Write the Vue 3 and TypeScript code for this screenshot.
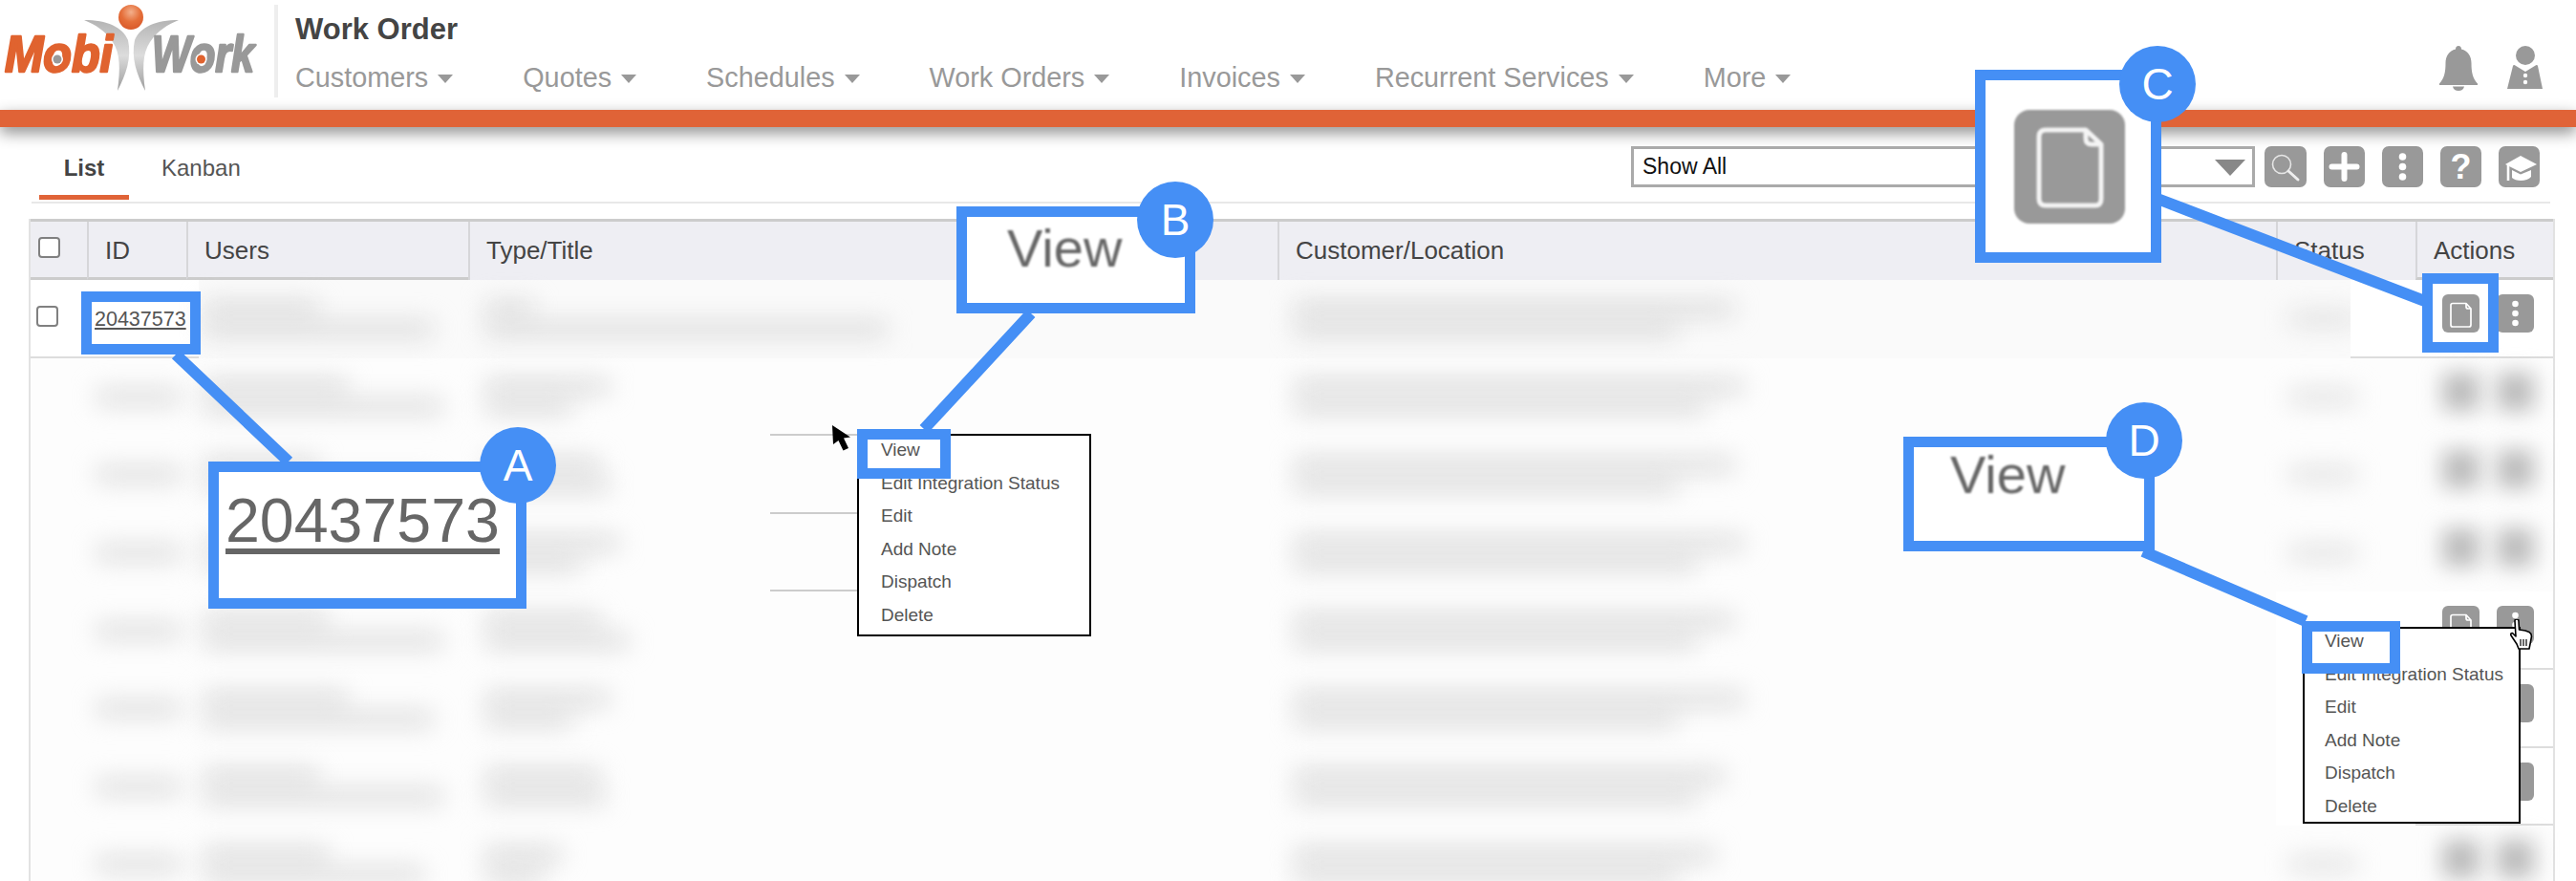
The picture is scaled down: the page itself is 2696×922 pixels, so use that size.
<script setup lang="ts">
interface Row {
  first?: boolean
  sharp?: boolean
  dots?: boolean
  doc?: boolean
  mark?: boolean
  users: number[]
  type: number[]
  cust: number[]
}

const nav: string[] = ['Customers', 'Quotes', 'Schedules', 'Work Orders', 'Invoices', 'Recurrent Services', 'More']
const heads: string[] = ['ID', 'Users', 'Type/Title', 'Customer/Location', 'Status', 'Actions']
const items: string[] = ['View', 'Edit Integration Status', 'Edit', 'Add Note', 'Dispatch', 'Delete']

const rows: Row[] = [
  { first: true, doc: true, dots: true, sharp: true, users: [120, 240], type: [50, 420], cust: [460, 400] },
  { mark: true, users: [150, 250], type: [130, 90], cust: [470, 430] },
  { mark: true, users: [120, 240], type: [120, 130], cust: [460, 400] },
  { mark: true, users: [150, 220], type: [140, 100], cust: [470, 420] },
  { sharp: true, doc: true, dots: true, users: [130, 250], type: [120, 150], cust: [460, 420] },
  { sharp: true, dots: true, users: [150, 240], type: [130, 90], cust: [470, 400] },
  { sharp: true, dots: true, users: [120, 250], type: [120, 125], cust: [450, 420] },
  { users: [130, 230], type: [80, 60], cust: [440, 400] },
]
</script>

<template>
  <div class="page">
    <header class="top">
      <svg class="logo" width="268" height="96" viewBox="0 0 268 96">
        <defs>
          <linearGradient id="limb" x1="0" y1="0" x2="0" y2="1">
            <stop offset="0" stop-color="#b4b4b4" />
            <stop offset="0.5" stop-color="#dcdcdc" />
            <stop offset="1" stop-color="#9c9c9c" />
          </linearGradient>
          <radialGradient id="ball" cx="0.5" cy="0.3" r="0.7">
            <stop offset="0" stop-color="#f3b08c" />
            <stop offset="0.55" stop-color="#e56f3a" />
            <stop offset="1" stop-color="#d95a2a" />
          </radialGradient>
        </defs>
        <path d="M88 21 C112 21 128 28 134 42 C138 60 132 78 123 95 C126 72 126 56 118 44 C110 32 100 26 88 21Z" fill="url(#limb)" />
        <path d="M187 21 C163 21 147 28 141 42 C137 60 143 78 152 95 C149 72 149 56 157 44 C165 32 175 26 187 21Z" fill="url(#limb)" />
        <circle cx="137" cy="18" r="13" fill="url(#ball)" />
        <text class="logo-word mobi" x="5" y="75" textLength="113" lengthAdjust="spacingAndGlyphs">Mobi</text>
        <text class="logo-word work" x="159" y="75" textLength="107" lengthAdjust="spacingAndGlyphs">Work</text>
        <circle cx="60" cy="62" r="6" fill="#fff" /><circle cx="60" cy="62" r="4.5" fill="#999" />
        <circle cx="210.500" cy="62" r="6" fill="#fff" /><circle cx="210.500" cy="62" r="4.5" fill="#e0632f" />
      </svg>
      <div class="divider"></div>
      <div class="title-block">
        <div class="title">Work Order</div>
        <nav class="nav">
          <span v-for="n in nav" :key="n" class="nav-item">{{ n }}<i class="caret"></i></span>
        </nav>
      </div>
      <div class="top-icons">
        <svg width="40" height="47" viewBox="0 0 40 47">
          <path fill="#999" d="M20 0c2 0 3 1.500 3 3.500C30 5 33.500 11 33.500 18c0 10 1.500 16 6.500 21.500V41H0v-1.500C5 34 6.500 28 6.500 18 6.500 11 10 5 17 3.500 17 1.500 18 0 20 0Z" />
          <path fill="#999" d="M14 42.500h12c-.5 3-3 4.500-6 4.500s-5.500-1.500-6-4.500Z" />
        </svg>
        <svg width="37" height="45" viewBox="0 0 37 45">
          <circle cx="19" cy="10" r="10" fill="#999" />
          <path fill="#999" d="M6 21 Q6 20 7.500 20 L19 27 L30.500 20 Q32 20 32 21 L37 45 H0Z" />
          <circle cx="19" cy="31" r="2.200" fill="#fff" /><circle cx="19" cy="38" r="2.200" fill="#fff" />
        </svg>
      </div>
    </header>
    <div class="band"></div>

    <div class="toolbar">
      <div class="tabs">
        <span class="tab tab-on">List</span>
        <span class="tab">Kanban</span>
      </div>
      <div class="tools">
        <div class="select">Show All<i class="select-caret"></i></div>
        <button class="tool tool-search">
          <svg width="44" height="43" viewBox="0 0 44 43">
            <circle cx="18" cy="19" r="9.500" fill="none" stroke="#e6e6e6" stroke-width="1.600" />
            <path d="M25 26 L35 35" stroke="#eee" stroke-width="3" stroke-linecap="round" />
          </svg>
        </button>
        <button class="tool">
          <svg width="43" height="43" viewBox="0 0 43 43">
            <path d="M21.500 9V34M8.500 21.500H34.500" stroke="#fff" stroke-width="6" stroke-linecap="round" />
          </svg>
        </button>
        <button class="tool">
          <svg width="43" height="43" viewBox="0 0 43 43">
            <circle cx="21.500" cy="11" r="3.800" fill="#fff" /><circle cx="21.500" cy="21.500" r="3.800" fill="#fff" /><circle cx="21.500" cy="32" r="3.800" fill="#fff" />
          </svg>
        </button>
        <button class="tool tool-q">?</button>
        <button class="tool">
          <svg width="43" height="43" viewBox="0 0 43 43">
            <path fill="#fff" d="M23 10 L40 19 L23 27 L7 19Z" />
            <path fill="#fff" d="M14 25 L23 29.500 L34 25 V32 C30 37 18 37 14 33Z" />
            <path d="M10 20 V36" stroke="#fff" stroke-width="2.600" />
          </svg>
        </button>
      </div>
    </div>

    <section class="table">
      <div class="grid head">
        <div class="hcell hcell-check"><input class="check" type="checkbox" /></div>
        <div v-for="h in heads" :key="h" class="hcell">{{ h }}</div>
      </div>
      <div v-for="(r, i) in rows" :key="i" class="grid row" :class="{ 'row-first': r.first }">
        <div class="cell cell-left cell-box"><input v-if="r.first" class="check" type="checkbox" /></div>
        <div class="cell cell-left cell-id">
          <a v-if="r.first" class="id-link">20437573</a>
          <span v-else class="bar bar-id"></span>
        </div>
        <div class="cell stack cell-users">
          <span v-for="w in r.users" :key="w" class="bar" :style="{ width: w + 'px' }"></span>
        </div>
        <div class="cell stack cell-type" :class="{ 'cell-marked': r.mark }">
          <span v-for="w in r.type" :key="w" class="bar" :style="{ width: w + 'px' }"></span>
        </div>
        <div class="cell stack cell-cust">
          <span v-for="w in r.cust" :key="w" class="bar" :style="{ width: w + 'px' }"></span>
        </div>
        <div class="cell cell-status" :class="{ 'status-clear': r.sharp && !r.first }">
          <span v-if="!r.sharp || r.first" class="bar bar-status"></span>
        </div>
        <div class="cell cell-actions" :class="{ 'cell-sharp': r.sharp }">
          <template v-if="r.sharp">
            <span class="act" :class="{ 'act-hidden': !r.doc }">
              <svg width="39" height="40" viewBox="0 0 39 40">
                <path d="M11 9.500 Q9 9.500 9 11.500 V32 Q9 34 11 34 H28 Q30 34 30 32 V15 L25 9.500Z M25 9.500 V13 Q25 15 27 15 H30" fill="none" stroke="#fff" stroke-width="1.700" stroke-linejoin="round" />
              </svg>
            </span>
            <span class="act">
              <svg width="39" height="40" viewBox="0 0 39 40">
                <circle cx="19.500" cy="10" r="3.300" fill="#fff" /><circle cx="19.500" cy="20" r="3.300" fill="#fff" /><circle cx="19.500" cy="30" r="3.300" fill="#fff" />
              </svg>
            </span>
          </template>
          <template v-else>
            <span class="blob"></span><span class="blob"></span>
          </template>
        </div>
      </div>
    </section>

    <ul class="menu menu-b">
      <li v-for="m in items" :key="m">{{ m }}</li>
    </ul>
    <ul class="menu menu-d">
      <li v-for="m in items" :key="m">{{ m }}</li>
    </ul>

    <svg class="arrow-cursor" width="22" height="28" viewBox="0 0 22 28">
      <path d="M0 0 L1 20 L6.500 16 L11.500 26.500 L17 24 L12 13.500 L19 12.500Z" fill="#000" />
    </svg>
    <svg class="hand-cursor" width="24" height="32" viewBox="0 0 24 32">
      <path d="M5 2 Q5 0 7 0 Q9 0 9 2 L9.500 11 L13 11.500 L16 12 L20 13.500 Q22.500 15 22.500 18 L21 26 L20 31 H9 L7 26 L1 17 Q0 14.500 2.500 14.500 L6 18Z" fill="#fff" stroke="#000" stroke-width="1.600" stroke-linejoin="round" />
      <path d="M11 21 V28M14 21 V28M17 21 V28" stroke="#000" stroke-width="1.200" />
    </svg>

    <svg class="leaders" width="2696" height="922" viewBox="0 0 2696 922">
      <path d="M184 371 L302 483M1079 328 L967 449M2258 208 L2540 316M2243 577 L2413 650" stroke="#458ff5" stroke-width="12" fill="none" />
    </svg>

    <div class="ring ring-a-s"></div>
    <div class="ring ring-b-s"></div>
    <div class="ring ring-c-s"></div>
    <div class="ring ring-d-s"></div>

    <div class="zoom zoom-a"><span class="zoom-id">20437573</span></div>
    <div class="zoom zoom-b"><span class="zoom-view">View</span></div>
    <div class="zoom zoom-c">
      <span class="zoom-doc">
        <svg width="116" height="119" viewBox="0 0 116 119">
          <path d="M33 21 Q26 21 26 28 V93 Q26 100 33 100 H85 Q91 100 91 93 V36 L75 21Z M75 21 V30 Q75 36 81 36 H91" fill="none" stroke="#f4f4f4" stroke-width="5" stroke-linejoin="round" />
        </svg>
      </span>
    </div>
    <div class="zoom zoom-d"><span class="zoom-view">View</span></div>

    <span class="badge badge-a">A</span>
    <span class="badge badge-b">B</span>
    <span class="badge badge-c">C</span>
    <span class="badge badge-d">D</span>
  </div>
</template>

<style>
html, body { margin: 0; background: #fff; overflow: hidden; }
</style>

<style scoped>
.page { position: relative; width: 2696px; height: 922px; overflow: hidden; background: #fff; font-family: "Liberation Sans", Arial, sans-serif; color: #444; }

.top { display: flex; height: 115px; box-sizing: border-box; }
.logo { flex: none; overflow: visible; }
.logo-word { font-family: "Liberation Sans", Arial, sans-serif; font-weight: 700; font-style: italic; font-size: 54px; stroke-width: 2.500px; stroke-linejoin: round; }
.mobi { fill: #e0632f; stroke: #e0632f; }
.work { fill: #999; stroke: #999; }
.divider { flex: none; width: 4px; height: 97px; margin: 5px 0 0 19px; background: #eee; }
.title-block { margin-left: 18px; padding-top: 13px; }
.title { font-size: 31px; line-height: 36px; font-weight: 700; color: #444; }
.nav { display: flex; gap: 73px; margin-top: 14px; }
.nav-item { display: flex; align-items: center; font-size: 28.800px; line-height: 36px; color: #999; }
.caret { width: 0; height: 0; margin: 3px 0 0 10px; border-left: 8px solid transparent; border-right: 8px solid transparent; border-top: 9px solid #999; }
.top-icons { display: flex; gap: 31px; margin-left: auto; margin-right: 35px; padding-top: 48px; align-items: flex-start; }

.band { position: relative; height: 18px; background: #e06337; box-shadow: 0 6px 16px rgba(0, 0, 0, 0.45); }

.toolbar { display: flex; justify-content: space-between; box-sizing: border-box; height: 80px; width: 2636px; margin-left: 33px; border-bottom: 2px solid #e8e8e8; }
.tabs { display: flex; gap: 34px; padding-left: 8px; align-items: flex-end; }
.tab { box-sizing: border-box; height: 56px; margin-bottom: 2px; padding-top: 7px; font-size: 24px; line-height: 32px; color: #555; }
.tab-on { width: 94px; text-align: center; font-weight: 700; color: #444; border-bottom: 5px solid #e06337; }
.tools { display: flex; align-items: flex-start; padding-top: 20px; margin-right: 11px; }
.select { position: relative; box-sizing: border-box; width: 653px; height: 43px; margin-right: 10px; padding-left: 9px; border: 3px solid #aaa; font-size: 23px; line-height: 37px; color: #111; background: #fff; }
.select-caret { position: absolute; right: 7px; top: 11px; width: 0; height: 0; border-left: 16px solid transparent; border-right: 16px solid transparent; border-top: 17px solid #888; }
.tool { flex: none; display: block; width: 43px; height: 43px; margin: 0 0 0 18px; padding: 0; border: 0; border-radius: 7px; background: #999; color: #fff; font: 700 36px/43px "Liberation Sans", Arial, sans-serif; }
.tool svg { display: block; }
.tool-search { width: 44px; margin-left: 0; }

.table { box-sizing: border-box; width: 2644px; margin: 16px 0 0 30px; border-left: 2px solid #e2e2e2; border-right: 2px solid #e2e2e2; }
.grid { display: grid; grid-template-columns: 59px 104px 295px 847px 1045px 146px 144px; }
.head { height: 64px; box-sizing: border-box; background: #eeeef3; border-top: 3px solid #ccc; }
.hcell { box-sizing: border-box; display: flex; align-items: center; padding-left: 17px; border-left: 2px solid #d6d6d9; font-size: 26px; color: #444; }
.hcell-check { padding-left: 8px; border-left: 0; border-bottom: 3px solid #ccc; align-items: flex-start; padding-top: 16px; }
.hcell:nth-child(2), .hcell:nth-child(3), .hcell:nth-child(7) { border-bottom: 3px solid #ccc; padding-top: 3px; }
.check { appearance: none; display: block; box-sizing: border-box; width: 23px; height: 22px; margin: 0; border: 2px solid #808080; border-radius: 4px; background: #fff; }

.row { height: 81.6px; background: #fdfdfd; }
.row-first { background: #fafafa; }
.cell { position: relative; box-sizing: border-box; display: flex; align-items: center; min-width: 0; }
.stack { flex-direction: column; align-items: flex-start; justify-content: center; gap: 6px; padding-left: 18px; }
.bar { display: block; flex: none; height: 15px; background: #d8d8d8; filter: blur(13px); }
.bar-id { width: 88px; margin-left: 10px; }
.bar-status { width: 70px; margin-left: 14px; background: #dedede; }
.row-first .cell-left { background: #fff; border-bottom: 2px solid #ddd; padding-left: 8px; }
.row-first .cell-box { padding: 0 0 4px 6px; }
.row-first .cell-id { padding-top: 3px; }
.row-first .cell-id::after { content: ""; position: absolute; left: 100%; top: 0; bottom: -2px; width: 13px; box-sizing: border-box; background: #fff; border-bottom: 2px solid #ddd; }
.id-link { font-size: 21.500px; color: #555; text-decoration: underline; }
.cell-marked::after { content: ""; position: absolute; left: 316px; bottom: 0; width: 240px; height: 2px; background: #ccc; }
.row-first .cell-status::after { content: ""; position: absolute; right: 0; top: 0; bottom: 0; width: 68px; box-sizing: border-box; background: #fff; border-bottom: 2px solid #ddd; }
.status-clear { background: #fff; }
.cell-actions { gap: 18px; padding: 15px 0 0 28px; align-items: flex-start; }
.cell-sharp { background: #fff; border-bottom: 2px solid #ddd; }
.act { flex: none; display: block; width: 39px; height: 40px; border-radius: 6px; background: #999; }
.act svg { display: block; }
.act-hidden { visibility: hidden; }
.blob { flex: none; width: 39px; height: 40px; background: #bcbcbc; filter: blur(11px); }

.menu { position: absolute; box-sizing: border-box; margin: 0; padding: 0 0 5px 23px; list-style: none; background: #fff; border: 2px solid #000; font-size: 19px; line-height: 34.600px; color: #555; }
.menu li:first-child { margin-top: -2px; }
.menu-b { left: 897px; top: 454px; width: 245px; height: 212px; }
.menu-d { left: 2410px; top: 656px; width: 228px; height: 206px; padding: 0 0 0 21px; }
.menu-d li:first-child { margin-top: -4px; }

.arrow-cursor { position: absolute; left: 871px; top: 445px; }
.hand-cursor { position: absolute; left: 2627px; top: 648px; }

.leaders { position: absolute; left: 0; top: 0; pointer-events: none; }
.ring { position: absolute; box-sizing: border-box; border: 11px solid #458ff5; }
.ring-a-s { left: 85px; top: 305px; width: 125px; height: 66px; }
.ring-b-s { left: 897px; top: 449px; width: 98px; height: 52px; }
.ring-c-s { left: 2535px; top: 286px; width: 80px; height: 83px; }
.ring-d-s { left: 2409px; top: 650px; width: 103px; height: 55px; }

.zoom { position: absolute; box-sizing: border-box; border: 11px solid #458ff5; background: #fff; }
.zoom-a { left: 218px; top: 483px; width: 333px; height: 154px; padding: 19px 0 0 7px; }
.zoom-b { left: 1001px; top: 216px; width: 250px; height: 112px; padding: 5px 0 0 42px; }
.zoom-c { left: 2067px; top: 73px; width: 195px; height: 202px; padding: 31px 0 0 30px; }
.zoom-d { left: 1992px; top: 457px; width: 263px; height: 120px; padding: 1px 0 0 38px; }
.zoom-id { display: block; font-size: 64.500px; line-height: 64.500px; color: #666; text-decoration: underline; text-decoration-thickness: 6px; text-underline-offset: 7px; filter: blur(0.7px); }
.zoom-view { display: block; font-size: 56px; line-height: 56px; color: #666; filter: blur(1px); }
.zoom-doc { display: block; width: 116px; height: 119px; border-radius: 16px; background: #999; filter: blur(0.8px); }
.zoom-doc svg { display: block; }

.badge { position: absolute; width: 80px; height: 80px; border-radius: 50%; background: #458ff5; color: #fff; font-size: 46px; line-height: 80px; text-align: center; }
.badge-a { left: 502px; top: 447px; }
.badge-b { left: 1190px; top: 190px; }
.badge-c { left: 2218px; top: 48px; }
.badge-d { left: 2204px; top: 421px; }
</style>
